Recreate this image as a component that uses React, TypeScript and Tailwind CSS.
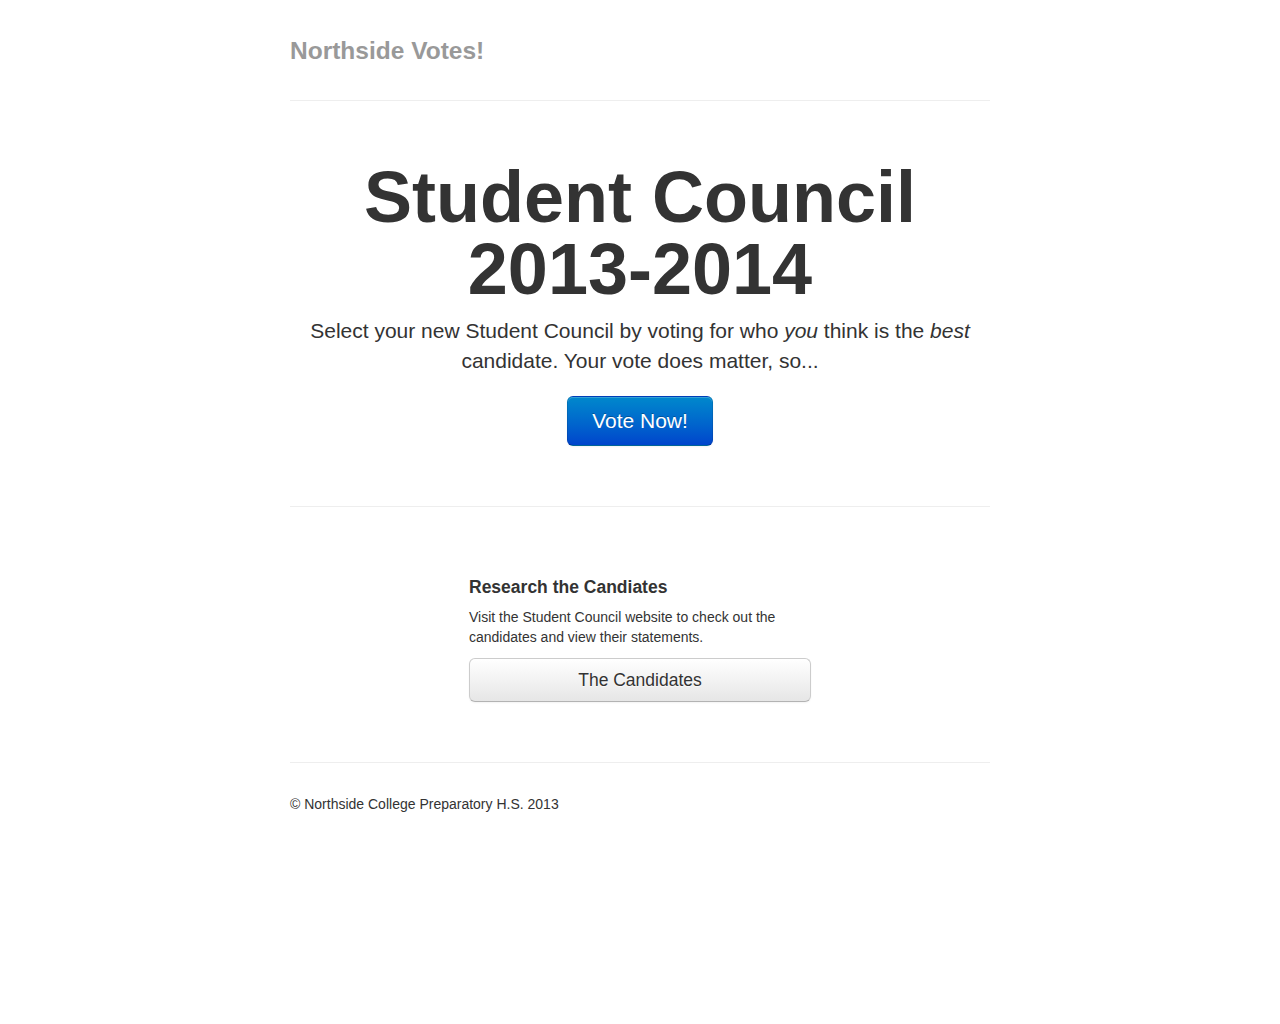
export default function App() {
  return (
    <div className="min-h-screen bg-white pt-[30px] font-['Liberation_Sans',Arial,sans-serif] text-[14px] leading-5 text-[#333]">
      <div className="mx-auto w-[700px]">
        {/* Masthead */}
        <h3 className="h-10 pt-px text-[24.5px] font-bold leading-10 text-[#999]">Northside Votes!</h3>
        <hr className="mt-[30px] border-t border-[#eee]" />

        {/* Jumbotron */}
        <div className="mt-[60px] text-center">
          <h1 className="text-[72px] font-bold leading-[72px] text-[#333]">
            Student Council
            <br />
            2013-2014
          </h1>
          <p className="mt-[11px] text-[21px] leading-[30px]">
            Select your new Student Council by voting for who <em>you</em> think is the <em>best</em> candidate. Your
            vote does matter, so...
          </p>
          <div className="mt-[20px] flex justify-center">
            <a
              href="#vote"
              className="flex h-[50px] items-center rounded-[6px] border border-black/10 border-b-black/25 bg-linear-to-b from-[#0088cc] to-[#0044cc] px-6 text-[21px] leading-5 text-white [text-shadow:0_-1px_0_rgba(0,0,0,0.25)] shadow-[inset_0_1px_0_rgba(255,255,255,0.2),0_1px_2px_rgba(0,0,0,0.05)]"
            >
              Vote Now!
            </a>
          </div>
        </div>

        <hr className="mt-[60px] border-t border-[#eee]" />

        {/* Marketing */}
        <div className="mt-[70px] ml-[179px] w-[342px]">
          <h4 className="text-[17.5px] font-bold leading-5">Research the Candiates</h4>
          <p className="mt-[10px]">
            Visit the Student Council website to check out the candidates and view their statements.
          </p>
          <a
            href="#candidates"
            className="mt-[11px] flex h-[44px] w-full items-center justify-center rounded-[6px] border border-[#ccc] border-b-[#b3b3b3] bg-linear-to-b from-white to-[#e6e6e6] text-[17.5px] leading-5 text-[#333] [text-shadow:0_1px_1px_rgba(255,255,255,0.75)] shadow-[inset_0_1px_0_rgba(255,255,255,0.2),0_1px_2px_rgba(0,0,0,0.05)]"
          >
            The Candidates
          </a>
        </div>

        <hr className="mt-[60px] border-t border-[#eee]" />

        {/* Footer */}
        <div className="mt-[31px]">
          <p>&copy; Northside College Preparatory H.S. 2013</p>
        </div>
      </div>
    </div>
  );
}
